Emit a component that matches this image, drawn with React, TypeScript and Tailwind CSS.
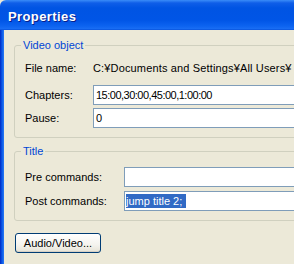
export default function App() {
  return (
    <div className="w-[294px] h-[264px] overflow-hidden flex flex-col bg-[#ECE9D8] font-['Liberation_Sans',Arial,sans-serif] text-[11px] leading-[13px] text-black">
      {/* title bar */}
      <div className="h-[30px] shrink-0 flex items-center pl-[8px] rounded-tl-[6px] bg-[linear-gradient(to_bottom,#3a8cf8_0px,#0f5ee8_3px,#0054e3_8px,#0055e6_20px,#0c63f0_26px,#1a6ef4_29px,#0049d4_30px)]">
        <span className="text-white font-bold text-[13px] tracking-[0.4px] mt-[3px] [text-shadow:1px_1px_0_#0a1e8a]">
          Properties
        </span>
      </div>

      <div className="flex flex-1">
        {/* window frame */}
        <div className="w-[4px] shrink-0 bg-[linear-gradient(to_right,#0027c4,#0a58e6_50%,#2a7af4)]" />

        <div className="flex-1 pl-[10px]">
          <fieldset className="w-[330px] mt-[9px] border border-[#D0D0BF] rounded-[3px]">
            <legend className="ml-[6px] px-[2px] text-[#0046D5]">Video object</legend>
            <div className="pt-[6px] pb-[9px] pl-[10px] flex flex-col">
              <div className="h-[20px] flex items-center">
                <span className="w-[68px] shrink-0">File name:</span>
                <span className="whitespace-nowrap tracking-[0.15px]">C:¥Documents and Settings¥All Users¥</span>
              </div>
              <div className="h-[20px] mt-[7px] flex items-center">
                <span className="w-[68px] shrink-0">Chapters:</span>
                <div className="flex-1 h-[20px] border border-[#7F9DB9] bg-white flex items-center pl-[2px] tracking-[-0.5px]">
                  15:00,30:00,45:00,1:00:00
                </div>
              </div>
              <div className="h-[20px] mt-[3px] flex items-center">
                <span className="w-[68px] shrink-0">Pause:</span>
                <div className="flex-1 h-[20px] border border-[#7F9DB9] bg-white flex items-center pl-[2px]">
                  0
                </div>
              </div>
            </div>
          </fieldset>

          <fieldset className="w-[330px] mt-[7px] border border-[#D0D0BF] rounded-[3px]">
            <legend className="ml-[6px] px-[2px] text-[#0046D5]">Title</legend>
            <div className="pt-[9px] pb-[9px] pl-[10px] flex flex-col">
              <div className="h-[20px] flex items-center">
                <span className="w-[99px] shrink-0">Pre commands:</span>
                <div className="flex-1 h-[20px] border border-[#7F9DB9] bg-white" />
              </div>
              <div className="h-[20px] mt-[4px] flex items-center">
                <span className="w-[99px] shrink-0">Post commands:</span>
                <div className="flex-1 h-[20px] border border-[#7F9DB9] bg-white flex items-center pl-[1px]">
                  <span className="bg-[#316AC5] text-white h-[14px] leading-[14px] pr-[4px] whitespace-nowrap">jump title 2;</span>
                </div>
              </div>
            </div>
          </fieldset>

          <button className="mt-[12px] ml-[1px] w-[86px] h-[20px] border border-[#003C74] rounded-[3px] bg-[linear-gradient(to_bottom,#ffffff,#f4f3ee_60%,#e6e3d6)] shadow-[inset_0_-1px_0_#d6d0c5] text-[11px] leading-[13px] flex items-center justify-center">
            Audio/Video...
          </button>
        </div>
      </div>
    </div>
  );
}
